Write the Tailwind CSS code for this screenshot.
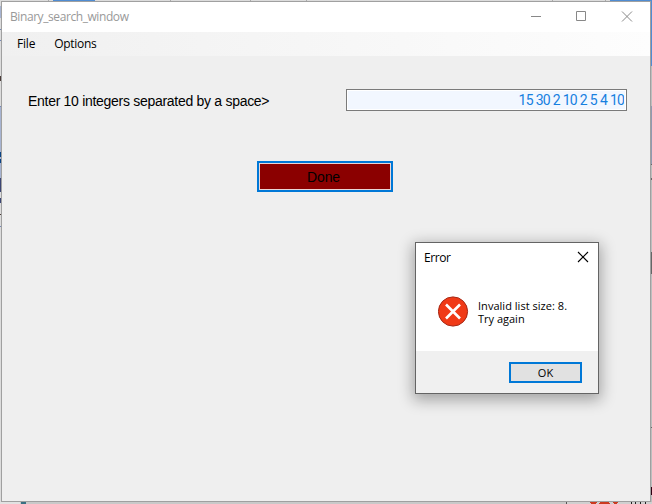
<!DOCTYPE html>
<html lang="en"><head><meta charset="utf-8"><title>Binary_search_window</title>
<script src="https://cdn.jsdelivr.net/npm/@tailwindcss/browser@4"></script></head>
<body class="relative h-[504px] w-[652px] overflow-hidden bg-[#c9c9c9] font-['Open_Sans','Noto_Sans',sans-serif] text-[12px] leading-4 text-black">
<!-- desktop visible around the window -->
<svg class="absolute inset-0" width="652" height="504" shape-rendering="crispEdges">
<path fill="#dcdcdc" d="M0 0h652v1H0z"/><path fill="#4f8cd2" d="M53 0h42v1H53zM610 0h42v66h-42z"/><path fill="#aaa" d="M48 0h1v1h-1zM170 0h1v1h-1zM250 0h1v1h-1zM306 0h1v1h-1zM552 0h1v1h-1zM605 0h1v1h-1z"/>
<path fill="#dcdcdc" d="M0 1h1v503H0z"/><path fill="#a6b3d1" d="M0 6h1v12H0zM0 106h1v72H0z"/><path fill="#7688b5" d="M0 29h1v1H0zM0 40h1v1H0zM0 106h1v1H0zM0 226h1v1H0z"/><path fill="#4a3c38" d="M0 76h1v5H0zM0 214h1v1H0z"/><path fill="#0a4384" d="M0 152h1v5H0zM0 159h1v4H0z"/><path fill="#3c4674" d="M0 178h1v14H0zM0 198h1v5H0z"/>
<path fill="#bebebe" d="M651 66h1v438h-1z"/><path fill="#9199b0" d="M651 106h1v58h-1z"/><path fill="#666" d="M651 164h1v1h-1zM651 178h1v2h-1zM651 252h1v22h-1zM651 427h1v1h-1z"/><path fill="#300012" d="M651 487h1v8h-1z"/>
<path fill="#e2e2e2" d="M0 502h20v2H0z"/><path fill="#d0d0d0" d="M567 502h85v2h-85z"/><path fill="#397083" d="M21 502h5v2h-5z"/><path fill="#555" d="M566 502h1v2h-1z"/><path fill="#cc3a20" d="M590 502h7l-2 2h-4zM600 502h8l2 2h-12zM612 502h6l-1 2h-3z"/><path fill="#222" d="M631 502h1v2h-1zM635 502h1v2h-1zM640 502h1v2h-1zM645 502h1v2h-1z"/>
</svg>
<main class="absolute left-px top-px flex h-[501px] w-[650px] flex-col border border-[#a0a0a0] bg-[#efefef]">
<header class="flex h-[30px] shrink-0 justify-between bg-white">
<h1 class="pl-2 pt-[7px] tracking-[-0.42px] text-[#999]">Binary_search_window</h1>
<svg class="mr-[17px] mt-[9px]" width="102" height="11" fill="none" stroke="#888"><path d="M0 5.500h10M45.500 .5h9v9h-9z"/><path d="M91 .5l10 10M101 .5l-10 10"/></svg>
</header>
<nav class="flex h-6 shrink-0 gap-[19px] bg-linear-to-r from-[#f0f0f0] to-[#fdfdfd] pl-[15px] pt-1">
<span class="tracking-[-0.2px]">File</span><span class="tracking-[-0.3px]">Options</span></nav>
<section class="flex flex-col font-['Liberation_Sans',sans-serif] text-[14px]">
<div class="flex justify-between pl-[26px] pr-[23px] pt-[33px]">
<label for="n" class="pt-[4px] tracking-[-0.29px]">Enter 10 integers separated by a space&gt;</label>
<input id="n" value="15 30 2 10 2 5 4 10" class="h-[22px] w-[281px] border border-[#7a7a7a] bg-[#f2f7ff] px-[2px] text-right font-['Roboto',sans-serif] text-[14px] tracking-[-0.85px] [word-spacing:0.4px] text-[#1680df] shadow-[inset_0_0_0_1px_white]">
</div>
<button class="ml-[255px] mt-[50px] h-[31px] w-[136px] border-2 border-[#0078d7] bg-[#8b0000] pr-[3px] tracking-[-0.1px] shadow-[inset_0_0_0_1px_#ead5d5]">Done</button>
</section>
</main>
<!-- error dialog -->
<section class="absolute left-[415px] top-[242px] flex h-[152px] w-[184px] flex-col border border-[#646464] bg-white shadow-[0_4px_14px_2px_rgba(0,0,0,0.32)]">
<header class="flex h-[53px] justify-between pl-2 pr-[9px] pt-[7px]"><h2 class="tracking-[-0.45px]">Error</h2>
<svg class="mt-[1px]" width="12" height="12" stroke="#000" stroke-width="1.100"><path d="M1 1l10 10M11 1L1 11"/></svg></header>
<div class="flex h-[55px] gap-[9px] pl-[22px]">
<svg class="shrink-0" width="31" height="31"><circle cx="15" cy="15.500" r="14.600" fill="#f03a17" stroke="#a52714"/><path d="M8 8.500l14 14M22 8.500l-14 14" stroke="#fff" stroke-width="2.600"/></svg>
<div class="whitespace-nowrap pt-[3px] text-[11px] leading-[13px]"><p class="tracking-[0.03px]">Invalid list size: 8.</p><p>Try again</p></div></div>
<footer class="flex flex-1 justify-end bg-[#f0f0f0] pr-4 pt-[11px]"><button class="h-[21px] w-[73px] border-2 border-[#0078d7] bg-[#e1e1e1] text-[11px]">OK</button></footer>
</section>
</body></html>
